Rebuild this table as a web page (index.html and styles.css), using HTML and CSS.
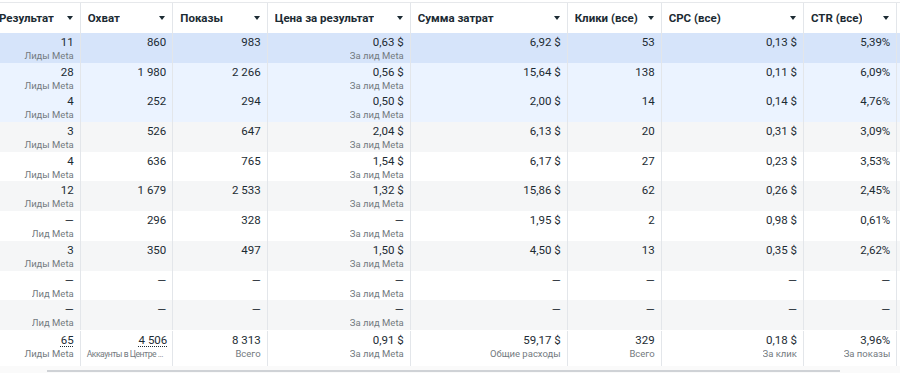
FILE: index.html
```html
<!DOCTYPE html>
<html lang="ru">
<head>
<meta charset="utf-8">
<title>Таблица</title>
<link rel="stylesheet" href="styles.css">
</head>
<body>
<div class="viewport">
  <div class="table">
    <div class="row head">
      <div class="cell"><span>Результат</span><i class="caret"></i></div>
      <div class="cell"><span>Охват</span><i class="caret"></i></div>
      <div class="cell"><span>Показы</span><i class="caret"></i></div>
      <div class="cell"><span>Цена за результат</span><i class="caret"></i></div>
      <div class="cell"><span>Сумма затрат</span><i class="caret"></i></div>
      <div class="cell"><span>Клики (все)</span><i class="caret"></i></div>
      <div class="cell"><span>CPC (все)</span><i class="caret"></i></div>
      <div class="cell"><span>CTR (все)</span><i class="caret"></i></div>
      <div class="cell"></div>
    </div>

    <div class="row sel">
      <div class="cell"><b>11</b><small>Лиды Meta</small></div>
      <div class="cell"><b>860</b></div>
      <div class="cell"><b>983</b></div>
      <div class="cell"><b>0,63 $</b><small>За лид Meta</small></div>
      <div class="cell"><b>6,92 $</b></div>
      <div class="cell"><b>53</b></div>
      <div class="cell"><b>0,13 $</b></div>
      <div class="cell"><b>5,39%</b></div>
      <div class="cell"></div>
    </div>
    <div class="row hl">
      <div class="cell"><b>28</b><small>Лиды Meta</small></div>
      <div class="cell"><b>1 980</b></div>
      <div class="cell"><b>2 266</b></div>
      <div class="cell"><b>0,56 $</b><small>За лид Meta</small></div>
      <div class="cell"><b>15,64 $</b></div>
      <div class="cell"><b>138</b></div>
      <div class="cell"><b>0,11 $</b></div>
      <div class="cell"><b>6,09%</b></div>
      <div class="cell"></div>
    </div>
    <div class="row hl">
      <div class="cell"><b>4</b><small>Лиды Meta</small></div>
      <div class="cell"><b>252</b></div>
      <div class="cell"><b>294</b></div>
      <div class="cell"><b>0,50 $</b><small>За лид Meta</small></div>
      <div class="cell"><b>2,00 $</b></div>
      <div class="cell"><b>14</b></div>
      <div class="cell"><b>0,14 $</b></div>
      <div class="cell"><b>4,76%</b></div>
      <div class="cell"></div>
    </div>
    <div class="row alt">
      <div class="cell"><b>3</b><small>Лиды Meta</small></div>
      <div class="cell"><b>526</b></div>
      <div class="cell"><b>647</b></div>
      <div class="cell"><b>2,04 $</b><small>За лид Meta</small></div>
      <div class="cell"><b>6,13 $</b></div>
      <div class="cell"><b>20</b></div>
      <div class="cell"><b>0,31 $</b></div>
      <div class="cell"><b>3,09%</b></div>
      <div class="cell"></div>
    </div>
    <div class="row">
      <div class="cell"><b>4</b><small>Лиды Meta</small></div>
      <div class="cell"><b>636</b></div>
      <div class="cell"><b>765</b></div>
      <div class="cell"><b>1,54 $</b><small>За лид Meta</small></div>
      <div class="cell"><b>6,17 $</b></div>
      <div class="cell"><b>27</b></div>
      <div class="cell"><b>0,23 $</b></div>
      <div class="cell"><b>3,53%</b></div>
      <div class="cell"></div>
    </div>
    <div class="row alt">
      <div class="cell"><b>12</b><small>Лиды Meta</small></div>
      <div class="cell"><b>1 679</b></div>
      <div class="cell"><b>2 533</b></div>
      <div class="cell"><b>1,32 $</b><small>За лид Meta</small></div>
      <div class="cell"><b>15,86 $</b></div>
      <div class="cell"><b>62</b></div>
      <div class="cell"><b>0,26 $</b></div>
      <div class="cell"><b>2,45%</b></div>
      <div class="cell"></div>
    </div>
    <div class="row">
      <div class="cell"><b>—</b><small>Лид Meta</small></div>
      <div class="cell"><b>296</b></div>
      <div class="cell"><b>328</b></div>
      <div class="cell"><b>—</b><small>За лид Meta</small></div>
      <div class="cell"><b>1,95 $</b></div>
      <div class="cell"><b>2</b></div>
      <div class="cell"><b>0,98 $</b></div>
      <div class="cell"><b>0,61%</b></div>
      <div class="cell"></div>
    </div>
    <div class="row alt">
      <div class="cell"><b>3</b><small>Лиды Meta</small></div>
      <div class="cell"><b>350</b></div>
      <div class="cell"><b>497</b></div>
      <div class="cell"><b>1,50 $</b><small>За лид Meta</small></div>
      <div class="cell"><b>4,50 $</b></div>
      <div class="cell"><b>13</b></div>
      <div class="cell"><b>0,35 $</b></div>
      <div class="cell"><b>2,62%</b></div>
      <div class="cell"></div>
    </div>
    <div class="row">
      <div class="cell"><b>—</b><small>Лид Meta</small></div>
      <div class="cell"><b>—</b></div>
      <div class="cell"><b>—</b></div>
      <div class="cell"><b>—</b><small>За лид Meta</small></div>
      <div class="cell"><b>—</b></div>
      <div class="cell"><b>—</b></div>
      <div class="cell"><b>—</b></div>
      <div class="cell"><b>—</b></div>
      <div class="cell"></div>
    </div>
    <div class="row alt">
      <div class="cell"><b>—</b><small>Лид Meta</small></div>
      <div class="cell"><b>—</b></div>
      <div class="cell"><b>—</b></div>
      <div class="cell"><b>—</b><small>За лид Meta</small></div>
      <div class="cell"><b>—</b></div>
      <div class="cell"><b>—</b></div>
      <div class="cell"><b>—</b></div>
      <div class="cell"><b>—</b></div>
      <div class="cell"></div>
    </div>

    <div class="row foot">
      <div class="cell"><b><u>65</u></b><small>Лиды Meta</small></div>
      <div class="cell wide"><b><u>4 506</u></b><small class="tight">Аккаунты в Центре ...</small></div>
      <div class="cell"><b>8 313</b><small>Всего</small></div>
      <div class="cell"><b>0,91 $</b><small>За лид Meta</small></div>
      <div class="cell"><b>59,17 $</b><small>Общие расходы</small></div>
      <div class="cell"><b>329</b><small>Всего</small></div>
      <div class="cell"><b>0,18 $</b><small>За клик</small></div>
      <div class="cell"><b>3,96%</b><small>За показы</small></div>
      <div class="cell"></div>
    </div>
  </div>
  <div class="track"><div class="thumb"></div></div>
</div>
</body>
</html>
```

FILE: styles.css
```css
* { box-sizing: border-box; }

html, body {
  margin: 0;
  padding: 0;
  background: #ffffff;
}

body {
  font-family: Roboto, "Liberation Sans", Arial, sans-serif;
  color: #1c2b33;
  width: 900px;
  height: 373px;
  overflow: hidden;
}

.viewport {
  width: 900px;
  overflow: hidden;
}

.table {
  margin-left: -8px;
  width: 915px;
  display: flex;
  flex-direction: column;
}

.row {
  display: grid;
  grid-template-columns: 88.7px 92.6px 94.4px 143px 157px 94px 142.3px 93.3px 1fr;
  height: 29.7px;
  background: #ffffff;
}

.row.sel { background: #d6e4fa; }
.row.hl { background: #ebf3ff; }
.row.alt { background: #f5f6f7; }

.cell {
  border-right: 1px solid #e3e6ea;
  padding: 2px 6px 0 7px;
  display: flex;
  flex-direction: column;
  align-items: flex-end;
  overflow: hidden;
  white-space: nowrap;
  min-width: 0;
}

.cell b {
  font-weight: 400;
  font-size: 11.5px;
  line-height: 14px;
  color: #1c2b33;
}

.cell small {
  font-size: 9.5px;
  line-height: 12px;
  margin-top: 1px;
  color: #737a80;
  max-width: 100%;
  overflow: hidden;
}

.cell.wide {
  padding-left: 6px;
  padding-right: 5px;
}

.cell small.tight {
  align-self: flex-start;
  max-width: none;
  overflow: visible;
  letter-spacing: -0.5px;
  font-size: 8.6px;
}

.row.head {
  border-top: 1px solid #e6e8eb;
  margin-top: 2px;
  height: 31px;
}

.row.head .cell {
  flex-direction: row;
  align-items: center;
  justify-content: space-between;
  padding: 0 6px 0 7px;
}

.row.head .cell span {
  font-weight: 700;
  font-size: 11.5px;
  color: #1c2b33;
  overflow: hidden;
}

.caret {
  width: 0;
  height: 0;
  flex: none;
  border-left: 3.5px solid transparent;
  border-right: 3.5px solid transparent;
  border-top: 4px solid #1c2b33;
  margin-right: 1px;
}

.row.foot {
  height: 36.5px;
  padding-top: 1px;
}

.row.foot .cell u {
  text-decoration: underline dotted;
  text-underline-offset: 2px;
}

.track {
  height: 6.5px;
  background: #fafafa;
  display: flex;
  align-items: flex-end;
}

.thumb {
  margin-left: 47px;
  width: 793px;
  height: 2px;
  background: #cfd2d6;
  margin-bottom: 1px;
}
```
